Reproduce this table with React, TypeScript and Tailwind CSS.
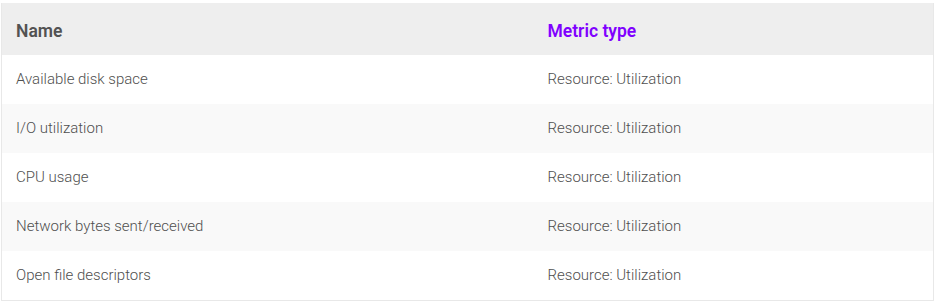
const rows = [
  ["Available disk space", "Resource: Utilization"],
  ["I/O utilization", "Resource: Utilization"],
  ["CPU usage", "Resource: Utilization"],
  ["Network bytes sent/received", "Resource: Utilization"],
  ["Open file descriptors", "Resource: Utilization"],
];

export default function App() {
  return (
    <div className="bg-white w-[935px] h-[303px] pt-[3px] pl-px font-['Roboto',sans-serif]">
      <table className="w-[933px] table-fixed border-collapse border border-[#e8e8e8] border-t-0">
        <colgroup>
          <col className="w-[546px]" />
          <col />
        </colgroup>
        <thead>
          <tr className="bg-[#eeeeee] h-[52px]">
            <th className="pl-[14px] pt-[5px] text-left text-[17.5px] font-semibold text-[#525252]">Name</th>
            <th className="pt-[5px] text-left text-[17.5px] font-semibold text-[#8000ff]">Metric type</th>
          </tr>
        </thead>
        <tbody>
          {rows.map(([name, type], i) => (
            <tr key={name} className={`h-[49px] ${i % 2 === 1 ? "bg-[#f9f9f9]" : "bg-white"}`}>
              <td className="pl-[14px] text-[15px] font-light text-[#4f4f4f]">{name}</td>
              <td className="text-[15px] font-light text-[#4f4f4f]">{type}</td>
            </tr>
          ))}
        </tbody>
      </table>
    </div>
  );
}
